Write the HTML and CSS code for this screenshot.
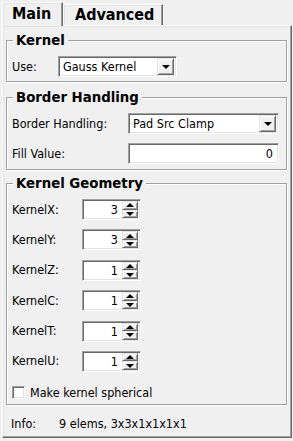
FILE: index.html
```html
<!DOCTYPE html>
<html>
<head>
<meta charset="utf-8">
<link rel="stylesheet" href="styles.css">
</head>
<body>
<div class="window">
  <div class="tabs">
    <div class="tab active">Main</div>
    <div class="tab">Advanced</div>
  </div>
  <div class="pane">
    <fieldset class="group g1">
      <legend>Kernel</legend>
      <div class="row">
        <span class="label w46">Use:</span>
        <div class="combo c1"><span class="ctext">Gauss Kernel</span><span class="dd"><span class="tri-down"></span></span></div>
      </div>
    </fieldset>
    <fieldset class="group g2">
      <legend>Border Handling</legend>
      <div class="rows">
        <div class="row">
          <span class="label w116">Border Handling:</span>
          <div class="combo c2"><span class="ctext">Pad Src Clamp</span><span class="dd"><span class="tri-down"></span></span></div>
        </div>
        <div class="row">
          <span class="label w116">Fill Value:</span>
          <div class="field">0</div>
        </div>
      </div>
    </fieldset>
    <fieldset class="group g3">
      <legend>Kernel Geometry</legend>
      <div class="rows geo">
        <div class="row"><span class="label w70">KernelX:</span><div class="spin"><span class="val">3</span><span class="btns"><span class="sb"><span class="tri-up"></span></span><span class="sb"><span class="tri-down small"></span></span></span></div></div>
        <div class="row"><span class="label w70">KernelY:</span><div class="spin"><span class="val">3</span><span class="btns"><span class="sb"><span class="tri-up"></span></span><span class="sb"><span class="tri-down small"></span></span></span></div></div>
        <div class="row"><span class="label w70">KernelZ:</span><div class="spin"><span class="val">1</span><span class="btns"><span class="sb"><span class="tri-up"></span></span><span class="sb"><span class="tri-down small"></span></span></span></div></div>
        <div class="row"><span class="label w70">KernelC:</span><div class="spin"><span class="val">1</span><span class="btns"><span class="sb"><span class="tri-up"></span></span><span class="sb"><span class="tri-down small"></span></span></span></div></div>
        <div class="row"><span class="label w70">KernelT:</span><div class="spin"><span class="val">1</span><span class="btns"><span class="sb"><span class="tri-up"></span></span><span class="sb"><span class="tri-down small"></span></span></span></div></div>
        <div class="row"><span class="label w70">KernelU:</span><div class="spin"><span class="val">1</span><span class="btns"><span class="sb"><span class="tri-up"></span></span><span class="sb"><span class="tri-down small"></span></span></span></div></div>
        <div class="row check-row"><span class="checkbox"></span><span class="label">Make kernel spherical</span></div>
      </div>
    </fieldset>
    <div class="info">
      <span class="label w48">Info:</span>
      <span class="label">9 elems, 3x3x1x1x1x1</span>
    </div>
  </div>
</div>
</body>
</html>
```

FILE: styles.css
```css
html, body {
  margin: 0;
  padding: 0;
  background: #f0f0f0;
}
body {
  width: 293px;
  height: 441px;
  overflow: hidden;
  font-family: "DejaVu Sans Condensed", "DejaVu Sans", sans-serif;
  font-stretch: condensed;
  font-size: 12.5px;
  color: #000;
}
.window {
  padding: 2px 0 0 2px;
}
.tabs {
  display: flex;
  align-items: flex-end;
  height: 23px;
  position: relative;
  z-index: 1;
}
.tab {
  font-weight: bold;
  font-size: 16px;
  line-height: 20px;
  box-sizing: border-box;
  border-left: 1px solid #fff;
  border-top: 1px solid #fff;
  border-right: 1px solid #696969;
  box-shadow: inset -1px 0 #a0a0a0, inset 1px 1px #e3e3e3;
  background: #f0f0f0;
}
.tab.active {
  width: 61px;
  height: 24px;
  padding: 1px 0 0 9px;
  margin-bottom: -1px;
}
.tab:not(.active) {
  width: 100px;
  height: 21px;
  padding: 0 0 0 11px;
}
.pane {
  box-sizing: border-box;
  width: 290px;
  height: 413px;
  border-left: 1px solid #fff;
  border-top: 1px solid #fff;
  border-right: 1px solid #696969;
  border-bottom: 1px solid #696969;
  box-shadow: inset -1px -1px #a0a0a0, inset 1px 1px #e3e3e3;
  padding: 5px 4px 0 3px;
}
.group {
  margin: 0;
  border: 1px solid #a0a0a0;
  box-shadow: inset 1px 1px #fff, 1px 1px #fff;
  padding: 7px 6px 4px 5px;
  min-width: 0;
}
.group legend {
  font-weight: bold;
  font-size: 14.8px;
  line-height: 18px;
  padding: 0 3px;
  margin-left: 1px;
  background: #f0f0f0;
}
.g2 { margin-top: 6px; padding-bottom: 5px; }
.g3 { margin-top: 4px; padding-bottom: 5px; }
.rows {
  display: flex;
  flex-direction: column;
  gap: 9px;
}
.rows.geo {
  gap: 9.4px;
}
.row {
  display: flex;
  align-items: center;
  height: 21px;
}
.label {
  white-space: nowrap;
  line-height: 14px;
}
.w46 { width: 46px; flex: none; }
.w48 { width: 48px; flex: none; }
.w70 { width: 70px; flex: none; }
.w116 { width: 116px; flex: none; }

.combo, .field, .spin {
  box-sizing: border-box;
  height: 21px;
  background: #fff;
  border: 1px solid;
  border-color: #a0a0a0 #fff #fff #a0a0a0;
  box-shadow: inset 1px 1px #696969, inset -1px -1px #e3e3e3;
  display: flex;
  align-items: center;
}
.combo { padding: 2px; }
.c1 { width: 119px; }
.c2 { width: 151px; }
.ctext {
  flex: 1;
  padding-left: 2px;
  white-space: nowrap;
}
.dd {
  box-sizing: border-box;
  width: 17px;
  height: 17px;
  background: #f0f0f0;
  border: 1px solid;
  border-color: #e3e3e3 #696969 #696969 #e3e3e3;
  box-shadow: inset 1px 1px #fff, inset -1px -1px #a0a0a0;
  display: flex;
  align-items: center;
  justify-content: center;
}
.tri-down {
  width: 0;
  height: 0;
  border-left: 4px solid transparent;
  border-right: 4px solid transparent;
  border-top: 4px solid #000;
  margin-top: 1px;
}
.tri-up {
  width: 0;
  height: 0;
  border-left: 4px solid transparent;
  border-right: 4px solid transparent;
  border-bottom: 4px solid #000;
}
.tri-down.small { margin-top: 0; }
.field {
  width: 151px;
  justify-content: flex-end;
  padding-right: 5px;
}
.spin {
  width: 59px;
  padding: 2px;
}
.val {
  flex: 1;
  text-align: right;
  padding-right: 4px;
}
.btns {
  display: flex;
  flex-direction: column;
  width: 16px;
  height: 17px;
}
.sb {
  box-sizing: border-box;
  flex: 1;
  background: #f0f0f0;
  border: 1px solid;
  border-color: #e3e3e3 #696969 #696969 #e3e3e3;
  box-shadow: inset 1px 1px #fff, inset -1px -1px #a0a0a0;
  display: flex;
  align-items: center;
  justify-content: center;
}
.check-row {
  margin-top: 5px;
  height: 13px;
  gap: 5px;
}
.checkbox {
  box-sizing: border-box;
  width: 13px;
  height: 13px;
  background: #fff;
  border: 1px solid;
  border-color: #a0a0a0 #fff #fff #a0a0a0;
  box-shadow: inset 1px 1px #696969, inset -1px -1px #e3e3e3;
}
.info {
  display: flex;
  align-items: center;
  height: 14px;
  margin-top: 12px;
  padding-left: 5px;
}
```
